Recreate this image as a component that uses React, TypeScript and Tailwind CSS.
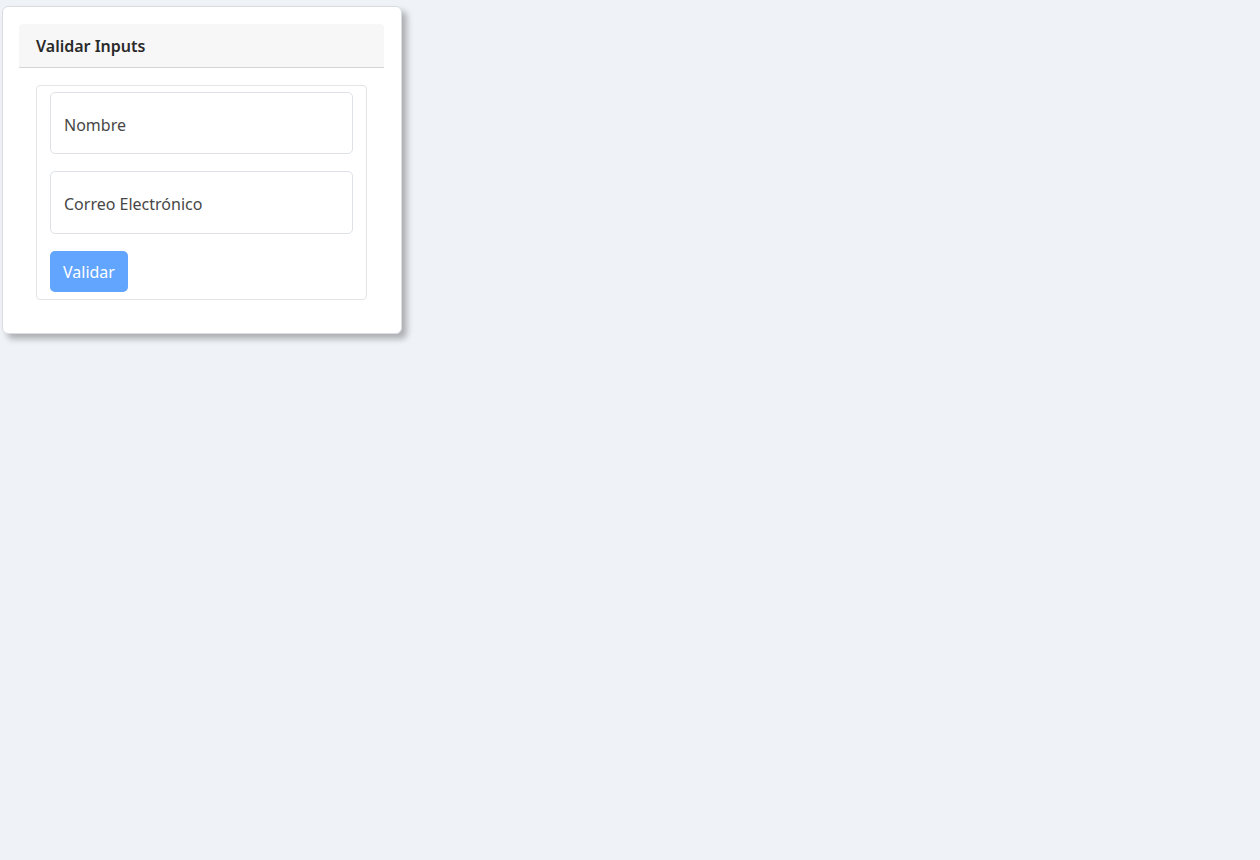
export default function App() {
  return (
    <div className="min-h-[860px] w-full bg-[#eff2f7] font-['Noto_Sans',sans-serif]">
      <div className="pl-[2px] pt-[6px]">
        <div className="w-[400px] rounded-[6px] border border-[#d9dce1] bg-white pl-[16px] pr-[17px] pt-[17px] pb-[33px] shadow-[5px_5px_6px_rgba(0,0,0,0.28)]">
          <div className="rounded-t-[4px] border-b border-[#d6d6d6] bg-[#f7f7f7] px-[17px] pt-[11px] pb-[10px]">
            <h1 className="text-[16px] font-semibold leading-[22px] text-[#2a2a2a]">Validar Inputs</h1>
          </div>
          <div className="mx-[17px] mt-[17px] flex flex-col gap-[17px] rounded-[4px] border border-[#e2e4e8] px-[13px] pt-[6px] pb-[7px]">
            <input
              type="text"
              placeholder="Nombre"
              className="h-[62px] w-full rounded-[5px] border border-[#dee2e6] px-[13px] pt-[4px] text-[16px] text-[#444] placeholder-[#474747] outline-none"
            />
            <input
              type="email"
              placeholder="Correo Electrónico"
              className="h-[63px] w-full rounded-[5px] border border-[#dee2e6] px-[13px] pt-[3px] text-[16px] text-[#444] placeholder-[#474747] outline-none"
            />
            <div>
              <button className="h-[41px] rounded-[5px] bg-[#62a5fe] px-[13px] text-[16px] text-white">
                Validar
              </button>
            </div>
          </div>
        </div>
      </div>
    </div>
  );
}
